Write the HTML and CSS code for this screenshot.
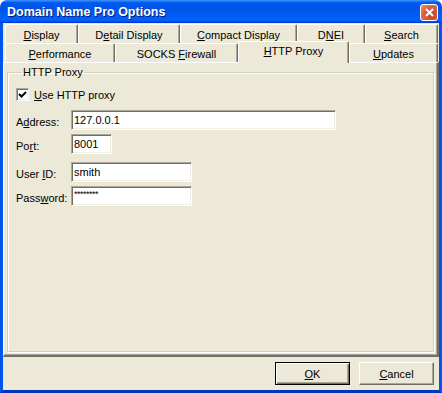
FILE: index.html
```html
<!DOCTYPE html>
<html lang="en">
<head>
    <meta charset="UTF-8">
    <title>Domain Name Pro Options</title>
    <link rel="stylesheet" href="styles.css">
</head>
<body>
    <div class="window">
        <div class="titlebar">
            <span class="title">Domain Name Pro Options</span>
            <button class="close" aria-label="Close">
                <svg width="9" height="9" viewBox="0 0 9 9"><path d="M1 1 L8 8 M8 1 L1 8" stroke="#fff" stroke-width="2"/></svg>
            </button>
        </div>
        <div class="client">
            <div class="tabs">
                <div class="tab-row">
                    <div class="tab w-display"><u>D</u>isplay</div>
                    <div class="tab w-detail">D<u>e</u>tail Display</div>
                    <div class="tab w-compact"><u>C</u>ompact Display</div>
                    <div class="tab w-dnei">D<u>N</u>EI</div>
                    <div class="tab w-search"><u>S</u>earch</div>
                </div>
                <div class="tab-row">
                    <div class="tab w-perf"><u>P</u>erformance</div>
                    <div class="tab w-socks">SOCKS <u>F</u>irewall</div>
                    <div class="tab w-http selected"><u>H</u>TTP Proxy</div>
                    <div class="tab w-updates"><u>U</u>pdates</div>
                </div>
            </div>
            <div class="panel">
                <fieldset class="group">
                    <legend>HTTP Proxy</legend>
                    <label class="check">
                        <span class="box">
                            <svg width="9" height="9" viewBox="0 0 9 9"><path d="M1 4 L3.5 6.5 L8 2" fill="none" stroke="#000" stroke-width="2"/></svg>
                        </span>
                        <span><u>U</u>se HTTP proxy</span>
                    </label>
                    <div class="form">
                        <label for="address">A<u>d</u>dress:</label>
                        <input id="address" class="field f-address" type="text" value="127.0.0.1">

                        <label for="port">Po<u>r</u>t:</label>
                        <input id="port" class="field f-port" type="text" value="8001">

                        <label for="user" class="gap">User <u>I</u>D:</label>
                        <input id="user" class="field f-user gap" type="text" value="smith">

                        <label for="password">Pass<u>w</u>ord:</label>
                        <input id="password" class="field f-user secret" type="text" value="********">
                    </div>
                </fieldset>
            </div>
            <div class="buttons">
                <button class="button default"><u>O</u>K</button>
                <button class="button"><u>C</u>ancel</button>
            </div>
        </div>
    </div>
</body>
</html>
```

FILE: styles.css
```css
body {
    margin: 0;
    background: #fff;
    font-family: "Liberation Sans", Arial, sans-serif;
    font-size: 11px;
    color: #000;
}
u {
    text-decoration-thickness: 1px;
    text-underline-offset: 1px;
}
.window {
    width: 442px;
    height: 393px;
    display: flex;
    flex-direction: column;
}
.titlebar {
    height: 23px;
    display: flex;
    align-items: center;
    justify-content: space-between;
    padding: 0 4px 0 7px;
    border-radius: 7px 7px 0 0;
    background: linear-gradient(180deg, #3d95ff, #0058ee 12%, #0054e8 40%, #0062f6 85%, #005bff 92%, #003dd7 96%, #003dd7);
}
.title {
    color: #fff;
    font-weight: bold;
    font-size: 12.5px;
    text-shadow: 1px 1px #0a1883;
    padding-top: 1px;
}
.close {
    width: 18px;
    height: 17px;
    margin-top: 1px;
    padding: 0;
    display: flex;
    align-items: center;
    justify-content: center;
    border: 1px solid #fff;
    border-radius: 3px;
    background: radial-gradient(circle at 70% 70%, #c84424, #e0623e 60%, #ee9a7f);
}
.client {
    flex: 1;
    display: flex;
    flex-direction: column;
    background: #ece9d8;
    border: 3px solid #0055ea;
    border-top: 0;
    border-bottom-color: #0036bc;
}
.tabs {
    padding: 1px 0 0 2px;
}
.tab-row {
    display: flex;
    height: 19px;
}
.tab {
    box-sizing: border-box;
    height: 19px;
    line-height: 20px;
    text-align: center;
    border-top: 1px solid #fff;
    border-left: 1px solid #fff;
    border-right: 1px solid #716f64;
    box-shadow: inset -1px 0 #aca899;
    border-radius: 2px 2px 0 0;
    background: #ece9d8;
}
.tab.selected {
    position: relative;
    z-index: 1;
    height: 22px;
    margin-top: -2px;
    line-height: 19px;
}
.w-display { width: 73px; }
.w-detail { width: 102px; }
.w-compact { width: 117px; }
.w-dnei { width: 68px; }
.w-search { width: 73px; }
.w-perf { width: 110px; }
.w-socks { width: 123px; }
.w-http { width: 111px; }
.w-updates { width: 89px; }
.panel {
    height: 295px;
    box-sizing: border-box;
    display: flex;
    flex-direction: column;
    padding: 3px 2px 2px 3px;
    border-top: 1px solid #fff;
    border-left: 1px solid #fff;
    border-right: 2px solid #716f64;
    border-bottom: 2px solid #716f64;
    box-shadow: inset -1px -1px #aca899;
}
.group {
    flex: 1;
    margin: 0 1px 1px 0;
    padding: 9px 8px 0 8px;
    border: 1px solid #d0d0bf;
    box-shadow: inset 1px 1px #fff, 1px 1px #fff;
}
.group legend {
    padding: 0 1px;
    margin-left: 6px;
    line-height: 13px;
}
.check {
    display: flex;
    align-items: center;
    gap: 5px;
    height: 13px;
}
.box {
    width: 13px;
    height: 13px;
    box-sizing: border-box;
    display: flex;
    align-items: center;
    justify-content: center;
    background: #fff;
    border: 1px solid;
    border-color: #aca899 #fff #fff #aca899;
    box-shadow: inset 1px 1px #716f64, inset -1px -1px #f1efe2;
}
.form {
    margin-top: 9px;
    display: grid;
    grid-template-columns: 55px auto;
    row-gap: 4px;
    align-items: center;
    justify-items: start;
}
.form label {
    padding-top: 3px;
}
.form .gap {
    margin-top: 4px;
}
.field {
    box-sizing: border-box;
    height: 20px;
    margin: 0;
    padding: 0 2px;
    font-family: inherit;
    font-size: 11px;
    color: #000;
    background: #fff;
    border: 1px solid;
    border-color: #aca899 #fff #fff #aca899;
    box-shadow: inset 1px 1px #716f64, inset -1px -1px #f1efe2;
    outline: none;
}
.f-address { width: 265px; }
.f-port { width: 41px; }
.f-user { width: 121px; }
.secret {
    font-size: 9px;
    padding-bottom: 5px;
    letter-spacing: -0.5px;
}
.buttons {
    display: flex;
    justify-content: flex-end;
    gap: 9px;
    padding: 5px 5px 0 0;
}
.button {
    width: 75px;
    height: 23px;
    padding: 0;
    font-family: inherit;
    font-size: 11px;
    color: #000;
    background: #ece9d8;
    border: 1px solid;
    border-color: #fff #716f64 #716f64 #fff;
    box-shadow: inset -1px -1px #aca899;
}
.button.default {
    border: 1px solid #000;
    box-shadow: inset 1px 1px #fff, inset -1px -1px #716f64, inset -2px -2px #aca899;
}
```
